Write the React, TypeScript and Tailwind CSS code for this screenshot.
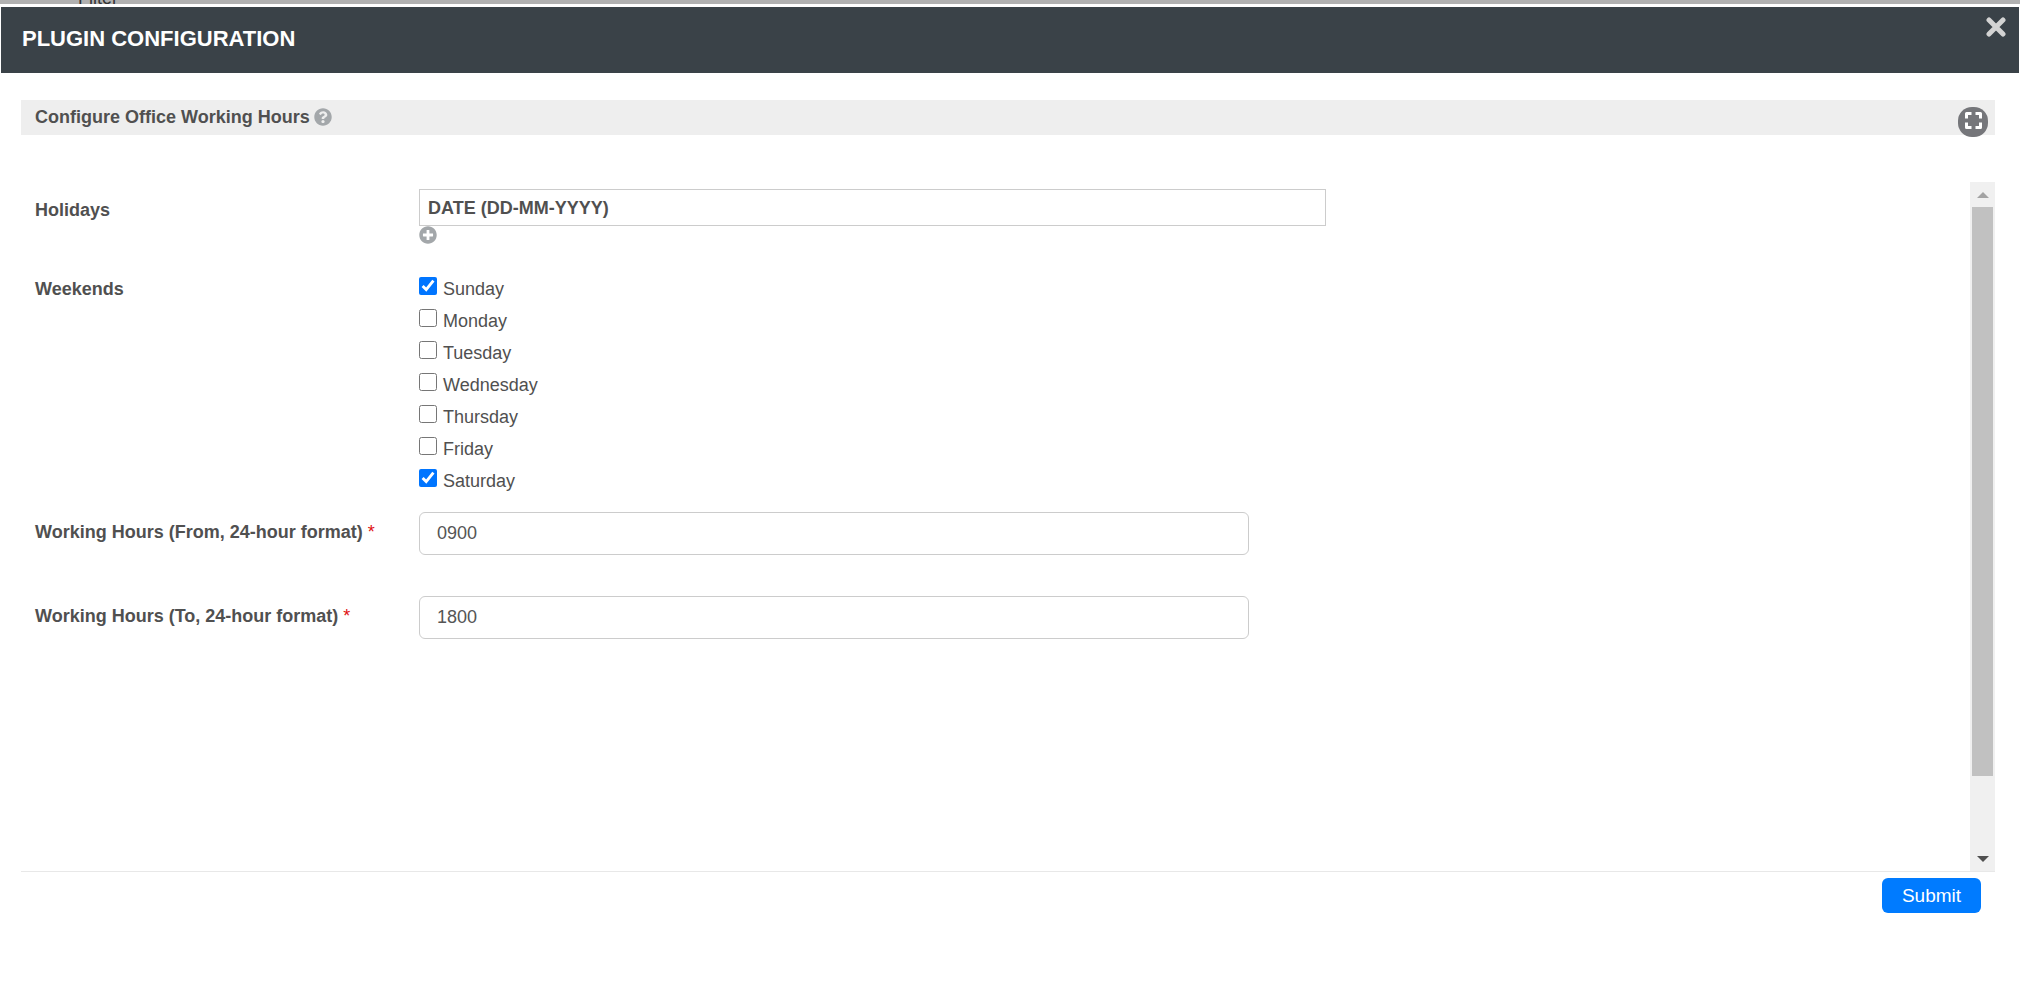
import { useState } from "react";
import { FaPlusCircle, FaQuestionCircle } from "react-icons/fa";

const DAYS = ["Sunday", "Monday", "Tuesday", "Wednesday", "Thursday", "Friday", "Saturday"];

interface HoursFieldProps {
  id: string;
  label: string;
  value: string;
  onChange: (value: string) => void;
}

function HoursField({ id, label, value, onChange }: HoursFieldProps) {
  return (
    <div className="grid grid-cols-[384px_1fr] items-start">
      <label htmlFor={id} className="pt-2 font-bold">
        {label} <span className="font-normal text-[#e01010]">*</span>
      </label>
      <input
        id={id}
        type="text"
        value={value}
        onChange={(e) => onChange(e.target.value)}
        className="h-[43px] w-[54%] rounded-md border border-[#ccc] bg-white px-[17px] text-[18px] text-[#555]"
      />
    </div>
  );
}

export default function App() {
  const [weekends, setWeekends] = useState<string[]>(["Sunday", "Saturday"]);
  const [from, setFrom] = useState("0900");
  const [to, setTo] = useState("1800");

  const toggleDay = (day: string) => {
    setWeekends((prev) => (prev.includes(day) ? prev.filter((d) => d !== day) : [...prev, day]));
  };

  return (
    <div className="flex min-h-screen flex-col bg-white font-['Liberation_Sans',Arial,sans-serif] text-[18px] leading-6 text-[#505050]">
      {/* Page behind the popup */}
      <div className="flex h-1 shrink-0 items-end overflow-hidden bg-[#b1b1b1] pl-[78px] text-[18px] leading-3 text-[#333]">
        Filter
      </div>

      {/* Header */}
      <header className="mx-px mt-[3px] flex h-[66px] shrink-0 items-start justify-between bg-[#3a4248] pr-[13px] pl-[21px]">
        <h1 className="pt-5 text-[22px] font-bold text-white">PLUGIN CONFIGURATION</h1>
        <button type="button" aria-label="Close" className="pt-[10px] text-[#d3d3d3]">
          <svg className="h-5 w-5" viewBox="0 0 20 20" fill="none" stroke="currentColor" strokeWidth="5" strokeLinecap="round">
            <path d="M3 3L17 17M17 3L3 17" />
          </svg>
        </button>
      </header>

      <main className="mt-[27px] mr-[25px] ml-[21px] flex flex-1 flex-col">
        {/* Section title */}
        <div className="flex h-[35px] items-start justify-between bg-[#eee] pr-[7px] pl-[14px]">
          <h2 className="flex items-center gap-1 pt-[5px] font-bold">
            Configure Office Working Hours
            <FaQuestionCircle className="h-[18px] w-[18px] text-[#a3a7aa]" />
          </h2>
          <button
            type="button"
            aria-label="Full screen"
            className="mt-[7px] flex h-[30px] w-[30px] shrink-0 justify-center rounded-[14px] bg-[#75767a] pt-[5px]"
          >
            <svg className="h-[17px] w-[17px]" viewBox="0 0 17 17" fill="none" stroke="#fff" strokeWidth="3" strokeLinejoin="round">
              <path d="M1.5 6.5V1.5H6.5M10.500 1.500H15.500V6.500M15.500 10.500V15.500H10.500M6.500 15.500H1.500V10.500" />
            </svg>
          </button>
        </div>

        {/* Form */}
        <div className="mt-[47px] flex flex-1 border-b border-[#e8e8e8]">
          <form className="flex-1 pt-[7px] pr-[14px] pl-[14px]">
            <div className="grid grid-cols-[384px_1fr] items-start">
              <span className="pt-[9px] font-bold">Holidays</span>
              <div>
                <table className="w-[59%] border-collapse border border-[#ccc]">
                  <thead>
                    <tr>
                      <th className="h-9 px-2 text-left font-bold">DATE (DD-MM-YYYY)</th>
                    </tr>
                  </thead>
                </table>
                <button type="button" aria-label="Add date" className="block text-[#a3a7aa]">
                  <FaPlusCircle className="h-[18px] w-[18px]" />
                </button>
              </div>
            </div>

            <div className="mt-[33px] grid grid-cols-[384px_1fr] items-start" role="group" aria-labelledby="weekends">
              <span id="weekends" className="font-bold">
                Weekends
              </span>
              <div className="flex flex-col items-start gap-2">
                {DAYS.map((day) => (
                  <label key={day} className="flex h-6 items-start gap-[6px]">
                    <input
                      type="checkbox"
                      checked={weekends.includes(day)}
                      onChange={() => toggleDay(day)}
                      className="h-[18px] w-[18px] accent-[#0075ff]"
                    />
                    {day}
                  </label>
                ))}
              </div>
            </div>

            <div className="mt-[19px] flex flex-col gap-[41px]">
              <HoursField id="from" label="Working Hours (From, 24-hour format)" value={from} onChange={setFrom} />
              <HoursField id="to" label="Working Hours (To, 24-hour format)" value={to} onChange={setTo} />
            </div>
          </form>

          {/* Scrollbar */}
          <div className="flex w-[25px] flex-col bg-[#f0f0f0]">
            <div className="flex h-[25px] items-center justify-center">
              <svg className="h-[6px] w-[12px]" viewBox="0 0 12 6">
                <path d="M0 6L6 0L12 6Z" fill="#a3a3a3" />
              </svg>
            </div>
            <div className="flex-1 px-[2px]">
              <div className="h-[89%] bg-[#c1c1c1]"></div>
            </div>
            <div className="flex h-[25px] items-center justify-center">
              <svg className="h-[6px] w-[12px]" viewBox="0 0 12 6">
                <path d="M0 0H12L6 6Z" fill="#505050" />
              </svg>
            </div>
          </div>
        </div>

        <div className="flex h-[110px] justify-end pt-[6px] pr-[14px]">
          <button type="submit" className="h-[35px] w-[99px] rounded-md bg-[#007bff] text-[19px] text-white">
            Submit
          </button>
        </div>
      </main>
    </div>
  );
}
